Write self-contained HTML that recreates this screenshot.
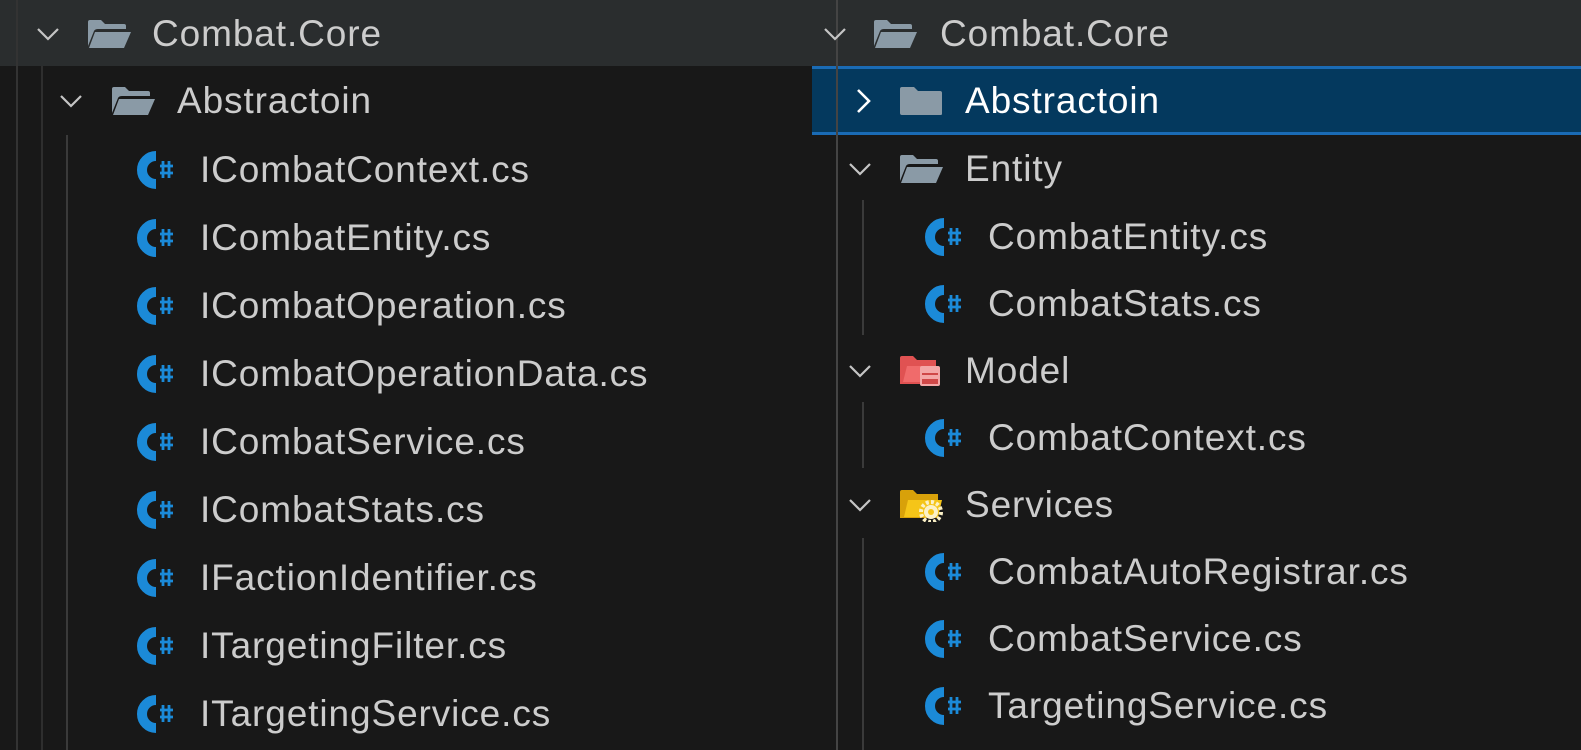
<!DOCTYPE html>
<html><head><meta charset="utf-8"><style>
*{margin:0;padding:0;box-sizing:border-box}
body{width:1581px;height:750px;background:#181818;position:relative;overflow:hidden;font-family:"Liberation Sans",sans-serif;color:#cccccc}
.bar{position:absolute;left:0;top:0;width:1581px;height:66px;background:#2a2d2e}
.sel{position:absolute;left:812px;top:66px;width:769px;height:69px;background:#04395e;border-top:3px solid #1a6bb5;border-bottom:3px solid #1a6bb5}
.t{position:absolute;font-size:37px;line-height:44px;white-space:nowrap;transform:translateY(-50%);letter-spacing:0.9px}
.ic{position:absolute;transform:translateY(-50%)}
.g{position:absolute;width:2px;background:#3a3a3a}
</style></head><body>
<div class="bar"></div>
<div class="sel"></div>
<div class="g" style="left:16px;top:0;height:750px;background:#333"></div>
<div class="g" style="left:41px;top:66px;height:684px;background:#2e2e2e"></div>
<div class="g" style="left:66px;top:135px;height:615px"></div>
<div class="g" style="left:836px;top:0;height:750px;background:#444"></div>
<div class="g" style="left:862px;top:200px;height:135px"></div>
<div class="g" style="left:862px;top:402px;height:66px"></div>
<div class="g" style="left:862px;top:538px;height:212px"></div>

<svg width="0" height="0" style="position:absolute">
<defs>
<symbol id="chd" viewBox="0 0 30 30"><path d="M5 10 L15 20 L25 10" fill="none" stroke="#c5c5c5" stroke-width="2.2"/></symbol>
<symbol id="chr" viewBox="0 0 30 30"><path d="M10 4 L21 15 L10 26" fill="none" stroke="#ffffff" stroke-width="2.6"/></symbol>
<symbol id="fo" viewBox="0 0 46 32"><path d="M2 4 Q2 2 4 2 L15 2 L19 6 L38 6 Q40 6 40 8 L40 11 L12 11 Q9 11 8 13 L2 28 Z" fill="#8a9aa6"/><path d="M9 14 L45 14 L38 30 L3 30 Z" fill="#8a9aa6"/></symbol>
<symbol id="fc" viewBox="0 0 46 32"><path d="M2 4 Q2 2 4 2 L16 2 L20 6 L42 6 Q44 6 44 8 L44 29 Q44 30 42 30 L4 30 Q2 30 2 28 Z" fill="#8a9aa6"/></symbol>
<symbol id="cs" viewBox="0 0 46 40"><path d="M24 6 A14 14 0 1 0 24 34" fill="none" stroke="#1b8ad8" stroke-width="10"/><path d="M31 11 V28 M37 11 V28 M28 16 H41 M28 23 H41" stroke="#1b8ad8" stroke-width="2.8"/></symbol>
<symbol id="fm" viewBox="0 0 46 34"><path d="M2 4 Q2 2 4 2 L15 2 L19 6 L38 6 L38 30 L2 30 Z" fill="#e05252"/><path d="M5 28 L9 12 L36 12 L36 28 Z" fill="#f06b6b"/><rect x="22" y="12" width="20" height="20" rx="2" fill="#f4a7a7"/><rect x="24" y="19" width="16" height="2" fill="#d04848"/><rect x="24" y="25" width="16" height="5" fill="#d04848"/></symbol>
<symbol id="fs" viewBox="0 0 46 34"><path d="M2 4 Q2 2 4 2 L15 2 L19 6 L40 6 L40 30 L2 30 Z" fill="#d8a10a"/><path d="M6 29 L10 12 L44 12 L40 29 Z" fill="#f5c518"/><circle cx="33" cy="24" r="7" fill="#fbf1c7"/><circle cx="33" cy="24" r="10" fill="none" stroke="#fbf1c7" stroke-width="4" stroke-dasharray="3 2.2"/><circle cx="33" cy="24" r="3" fill="#f5c518"/></symbol>
</defs></svg>

<!-- LEFT -->
<svg class="ic" style="left:33px;top:34px" width="30" height="30"><use href="#chd"/></svg>
<svg class="ic" style="left:86px;top:34px" width="46" height="32"><use href="#fo"/></svg>
<div class="t" style="left:152px;top:34px">Combat.Core</div>

<svg class="ic" style="left:56px;top:101px" width="30" height="30"><use href="#chd"/></svg>
<svg class="ic" style="left:110px;top:101px" width="46" height="32"><use href="#fo"/></svg>
<div class="t" style="left:177px;top:101px">Abstractoin</div>

<svg class="ic" style="left:132px;top:170px" width="46" height="40"><use href="#cs"/></svg><div class="t" style="left:200px;top:170px">ICombatContext.cs</div>
<svg class="ic" style="left:132px;top:238px" width="46" height="40"><use href="#cs"/></svg><div class="t" style="left:200px;top:238px">ICombatEntity.cs</div>
<svg class="ic" style="left:132px;top:306px" width="46" height="40"><use href="#cs"/></svg><div class="t" style="left:200px;top:306px">ICombatOperation.cs</div>
<svg class="ic" style="left:132px;top:374px" width="46" height="40"><use href="#cs"/></svg><div class="t" style="left:200px;top:374px">ICombatOperationData.cs</div>
<svg class="ic" style="left:132px;top:442px" width="46" height="40"><use href="#cs"/></svg><div class="t" style="left:200px;top:442px">ICombatService.cs</div>
<svg class="ic" style="left:132px;top:510px" width="46" height="40"><use href="#cs"/></svg><div class="t" style="left:200px;top:510px">ICombatStats.cs</div>
<svg class="ic" style="left:132px;top:578px" width="46" height="40"><use href="#cs"/></svg><div class="t" style="left:200px;top:578px">IFactionIdentifier.cs</div>
<svg class="ic" style="left:132px;top:646px" width="46" height="40"><use href="#cs"/></svg><div class="t" style="left:200px;top:646px">ITargetingFilter.cs</div>
<svg class="ic" style="left:132px;top:714px" width="46" height="40"><use href="#cs"/></svg><div class="t" style="left:200px;top:714px">ITargetingService.cs</div>

<!-- RIGHT -->
<svg class="ic" style="left:820px;top:34px" width="30" height="30"><use href="#chd"/></svg>
<svg class="ic" style="left:872px;top:34px" width="46" height="32"><use href="#fo"/></svg>
<div class="t" style="left:940px;top:34px">Combat.Core</div>

<svg class="ic" style="left:848px;top:101px" width="30" height="30"><use href="#chr"/></svg>
<svg class="ic" style="left:898px;top:101px" width="46" height="32"><use href="#fc"/></svg>
<div class="t" style="left:965px;top:101px;color:#fff">Abstractoin</div>

<svg class="ic" style="left:845px;top:169px" width="30" height="30"><use href="#chd"/></svg>
<svg class="ic" style="left:898px;top:169px" width="46" height="32"><use href="#fo"/></svg>
<div class="t" style="left:965px;top:169px">Entity</div>
<svg class="ic" style="left:920px;top:237px" width="46" height="40"><use href="#cs"/></svg><div class="t" style="left:988px;top:237px">CombatEntity.cs</div>
<svg class="ic" style="left:920px;top:304px" width="46" height="40"><use href="#cs"/></svg><div class="t" style="left:988px;top:304px">CombatStats.cs</div>

<svg class="ic" style="left:845px;top:371px" width="30" height="30"><use href="#chd"/></svg>
<svg class="ic" style="left:898px;top:371px" width="46" height="34"><use href="#fm"/></svg>
<div class="t" style="left:965px;top:371px">Model</div>
<svg class="ic" style="left:920px;top:438px" width="46" height="40"><use href="#cs"/></svg><div class="t" style="left:988px;top:438px">CombatContext.cs</div>

<svg class="ic" style="left:845px;top:505px" width="30" height="30"><use href="#chd"/></svg>
<svg class="ic" style="left:898px;top:505px" width="46" height="34"><use href="#fs"/></svg>
<div class="t" style="left:965px;top:505px">Services</div>
<svg class="ic" style="left:920px;top:572px" width="46" height="40"><use href="#cs"/></svg><div class="t" style="left:988px;top:572px">CombatAutoRegistrar.cs</div>
<svg class="ic" style="left:920px;top:639px" width="46" height="40"><use href="#cs"/></svg><div class="t" style="left:988px;top:639px">CombatService.cs</div>
<svg class="ic" style="left:920px;top:706px" width="46" height="40"><use href="#cs"/></svg><div class="t" style="left:988px;top:706px">TargetingService.cs</div>
</body></html>
